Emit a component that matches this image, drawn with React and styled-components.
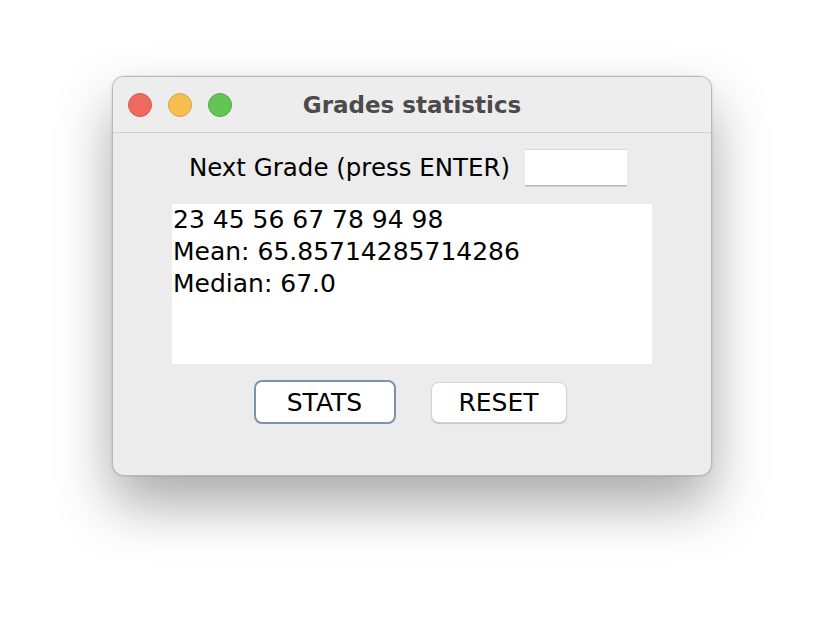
import React from "react";
import styled, { createGlobalStyle } from "styled-components";

const Global = createGlobalStyle`
  html, body { margin: 0; padding: 0; background: #ffffff; }
  body { font-family: "DejaVu Sans", "Liberation Sans", sans-serif; }
`;

const Page = styled.div`
  width: 824px;
  height: 624px;
  display: flex;
  justify-content: center;
  align-items: flex-start;
  padding-top: 76px;
  box-sizing: border-box;
`;

const Window = styled.div`
  width: 600px;
  height: 400px;
  box-sizing: border-box;
  border: 1px solid #b9b9b9;
  border-radius: 12px;
  background: #ececec;
  box-shadow: 0 28px 56px rgba(0, 0, 0, 0.34), 0 0 2px rgba(0, 0, 0, 0.2);
  display: flex;
  flex-direction: column;
  overflow: hidden;
`;

const TitleBar = styled.div`
  height: 56px;
  flex: none;
  box-sizing: border-box;
  border-bottom: 1px solid #d0d0d0;
  background: #ededed;
  display: grid;
  grid-template-columns: 1fr auto 1fr;
  align-items: center;
  padding: 0 15px;
`;

const Lights = styled.div`
  display: flex;
  gap: 16px;
`;

const Light = styled.span`
  width: 24px;
  height: 24px;
  border-radius: 50%;
  box-sizing: border-box;
  background: ${(p) => p.$fill};
  border: 1px solid ${(p) => p.$edge};
`;

const Title = styled.div`
  font-family: "DejaVu Sans", sans-serif;
  font-weight: bold;
  font-size: 23px;
  color: #4b4b4b;
  padding-top: 1px;
`;

const Body = styled.div`
  display: flex;
  flex-direction: column;
  align-items: center;
  padding-top: 16px;
  font-family: "DejaVu Sans", sans-serif;
  color: #000;
`;

const InputRow = styled.div`
  display: flex;
  align-items: center;
  gap: 15px;
  height: 37px;
  padding-right: 8px;
`;

const Label = styled.span`
  font-size: 24.5px;
`;

const Field = styled.div`
  width: 102px;
  height: 37px;
  box-sizing: border-box;
  background: #fff;
  border-top: 1px solid #d6d6d6;
  border-bottom: 1px solid #b8b8b8;
  box-shadow: 0 1px 0 #cfcfcf;
`;

const Output = styled.div`
  margin-top: 18px;
  width: 480px;
  height: 160px;
  background: #fff;
  box-sizing: border-box;
  padding: 0 0 0 1px;
  font-size: 25px;
  line-height: 32px;
`;

const Buttons = styled.div`
  display: flex;
  align-items: center;
  gap: 35px;
  margin-top: 16px;
  padding-right: 4px;
`;

const Button = styled.div`
  width: ${(p) => p.$w}px;
  height: ${(p) => p.$h}px;
  box-sizing: border-box;
  border-radius: 8px;
  background: #fff;
  display: flex;
  align-items: center;
  justify-content: center;
  font-size: 25px;
  border: ${(p) => (p.$focus ? "2px solid #8092ab" : "1px solid #d4d4d4")};
  box-shadow: ${(p) =>
    p.$focus ? "none" : "0 1px 1px rgba(0,0,0,0.18)"};
`;

export default function App() {
  return (
    <>
      <Global />
      <Page>
        <Window>
          <TitleBar>
            <Lights>
              <Light $fill="#ee6a5f" $edge="#d55a50" />
              <Light $fill="#f6be4f" $edge="#d9a441" />
              <Light $fill="#62c554" $edge="#52a944" />
            </Lights>
            <Title>Grades statistics</Title>
            <span />
          </TitleBar>
          <Body>
            <InputRow>
              <Label>Next Grade (press ENTER)</Label>
              <Field />
            </InputRow>
            <Output>
              23 45 56 67 78 94 98
              <br />
              Mean: 65.85714285714286
              <br />
              Median: 67.0
            </Output>
            <Buttons>
              <Button $w={142} $h={44} $focus>
                STATS
              </Button>
              <Button $w={136} $h={41}>
                RESET
              </Button>
            </Buttons>
          </Body>
        </Window>
      </Page>
    </>
  );
}
